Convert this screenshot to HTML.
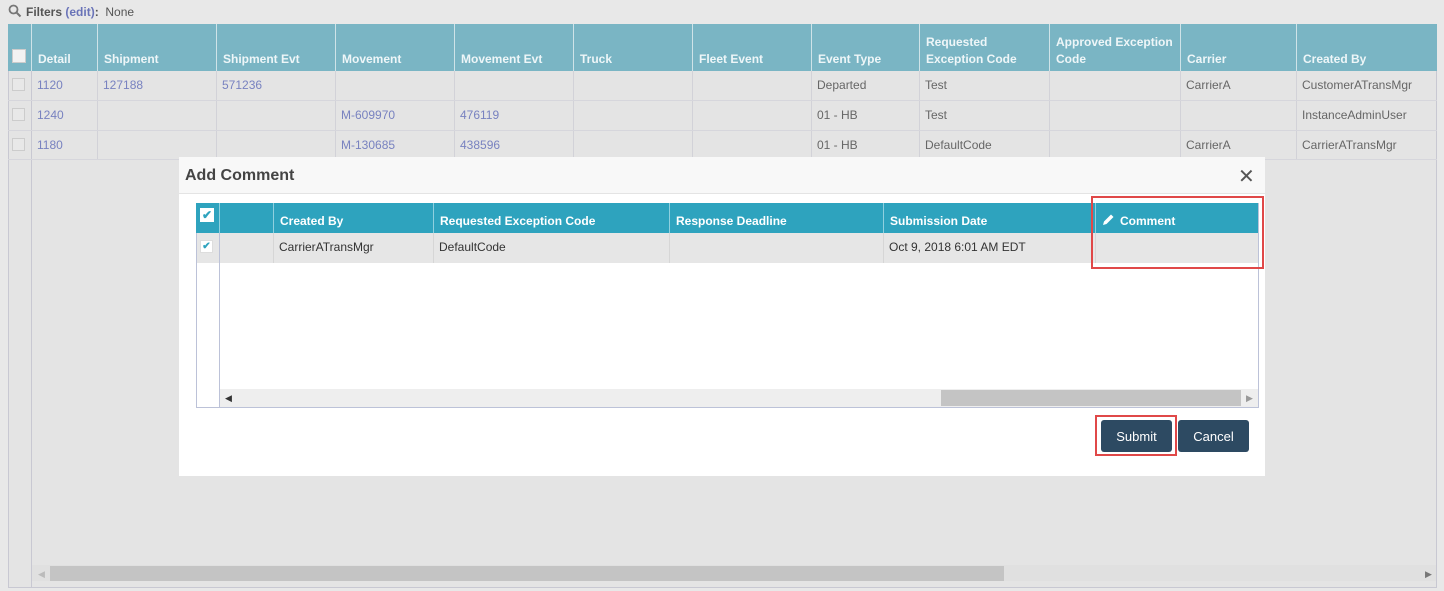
<!DOCTYPE html>
<html><head><style>
*{box-sizing:border-box;margin:0;padding:0}
body{width:1444px;height:591px;background:#e8e8e8;font-family:"Liberation Sans",sans-serif;font-size:12px;position:relative;overflow:hidden;color:#555}
.a{position:absolute}
.hd{background:#7ab5c4;color:#eef6f8;font-weight:bold}
.hc{position:absolute;top:24px;height:47px;border-left:1px solid #cfe3e8;padding:0 6px;display:flex;align-items:flex-end;padding-bottom:3px;line-height:17px;font-weight:bold;color:#eef6f8;font-size:12px}
.vl{position:absolute;top:71px;height:88px;border-left:1px solid #d2d2d8}
.hl{position:absolute;left:8px;width:1429px;border-top:1px solid #d6d6dc}
.c{position:absolute;font-size:12px;color:#666}
.lk{color:#7882c0}
.cb{position:absolute;width:13px;height:13px;border:1px solid #ccc;background:#e8e8e8}
.mh{position:absolute;top:203px;height:30px;border-left:1px solid #8fd0df;color:#fff;font-weight:bold;padding:11px 6px 0;font-size:12px}
.btn{position:absolute;top:420px;height:32px;background:#2d4a62;color:#fff;border-radius:3px;font-size:13px;display:flex;align-items:center;justify-content:center}
</style></head><body>
<svg class="a" style="left:8px;top:4px" width="14" height="14" viewBox="0 0 14 14"><circle cx="5.5" cy="5.5" r="4" fill="none" stroke="#777" stroke-width="1.8"/><path d="M8.5 8.5L12.5 12.5" stroke="#777" stroke-width="2"/></svg>
<div class="a" style="left:26px;top:5px;font-size:12px;color:#555"><b>Filters</b> <b style="color:#6a74b8">(edit)</b><b>:</b> &nbsp;None</div>
<div class="a" style="left:8px;top:24px;width:1429px;height:564px;border:1px solid #c8c8d2;background:#e4e4e4"></div>
<div class="a hd" style="left:8px;top:24px;width:1429px;height:47px"></div>
<div class="a" style="left:31px;top:24px;height:564px;border-left:1px solid #c8c8d2"></div>
<div class="a" style="left:12px;top:49px;width:14px;height:14px;background:#f2f2f2;border:1px solid #ccc"></div>
<div class="hc" style="left:31px;width:66px">Detail</div>
<div class="hc" style="left:97px;width:119px">Shipment</div>
<div class="hc" style="left:216px;width:119px">Shipment Evt</div>
<div class="hc" style="left:335px;width:119px">Movement</div>
<div class="hc" style="left:454px;width:119px">Movement Evt</div>
<div class="hc" style="left:573px;width:119px">Truck</div>
<div class="hc" style="left:692px;width:119px">Fleet Event</div>
<div class="hc" style="left:811px;width:108px">Event Type</div>
<div class="hc" style="left:919px;width:130px">Requested<br>Exception Code</div>
<div class="hc" style="left:1049px;width:131px">Approved Exception<br>Code</div>
<div class="hc" style="left:1180px;width:116px">Carrier</div>
<div class="hc" style="left:1296px;width:141px">Created By</div>
<div class="vl" style="left:97px"></div><div class="vl" style="left:216px"></div><div class="vl" style="left:335px"></div><div class="vl" style="left:454px"></div><div class="vl" style="left:573px"></div><div class="vl" style="left:692px"></div><div class="vl" style="left:811px"></div><div class="vl" style="left:919px"></div><div class="vl" style="left:1049px"></div><div class="vl" style="left:1180px"></div><div class="vl" style="left:1296px"></div>
<div class="hl" style="top:100px"></div><div class="hl" style="top:130px"></div><div class="hl" style="top:159px"></div>
<div class="cb" style="left:12px;top:78px"></div><div class="cb" style="left:12px;top:108px"></div><div class="cb" style="left:12px;top:138px"></div>
<div class="c lk" style="left:37px;top:78px">1120</div><div class="c lk" style="left:103px;top:78px">127188</div><div class="c lk" style="left:222px;top:78px">571236</div>
<div class="c" style="left:817px;top:78px">Departed</div><div class="c" style="left:925px;top:78px">Test</div><div class="c" style="left:1186px;top:78px">CarrierA</div><div class="c" style="left:1302px;top:78px">CustomerATransMgr</div>
<div class="c lk" style="left:37px;top:108px">1240</div><div class="c lk" style="left:341px;top:108px">M-609970</div><div class="c lk" style="left:460px;top:108px">476119</div>
<div class="c" style="left:817px;top:108px">01 - HB</div><div class="c" style="left:925px;top:108px">Test</div><div class="c" style="left:1302px;top:108px">InstanceAdminUser</div>
<div class="c lk" style="left:37px;top:138px">1180</div><div class="c lk" style="left:341px;top:138px">M-130685</div><div class="c lk" style="left:460px;top:138px">438596</div>
<div class="c" style="left:817px;top:138px">01 - HB</div><div class="c" style="left:925px;top:138px">DefaultCode</div><div class="c" style="left:1186px;top:138px">CarrierA</div><div class="c" style="left:1302px;top:138px">CarrierATransMgr</div>
<div class="a" style="left:32px;top:565px;width:1404px;height:16px;background:#e0e0e0"></div>
<div class="a" style="left:50px;top:566px;width:954px;height:15px;background:#c4c4c4"></div>
<div class="a" style="left:38px;top:569px;color:#bbb;font-size:9px">◀</div><div class="a" style="left:1425px;top:569px;color:#777;font-size:9px">▶</div>

<div class="a" style="left:179px;top:157px;width:1086px;height:319px;background:#fff"></div>
<div class="a" style="left:179px;top:157px;width:1086px;height:37px;background:#f8f8f8;border-bottom:1px solid #e4e4e4"></div>
<div class="a" style="left:185px;top:167px;font-size:16px;font-weight:bold;color:#444">Add Comment</div>
<div class="a" style="left:1238px;top:164px;font-size:20px;color:#555">✕</div>
<div class="a" style="left:196px;top:203px;width:1063px;height:205px;border:1px solid #bcc2d8"></div>
<div class="a" style="left:196px;top:203px;width:1062px;height:30px;background:#2ea3be"></div>
<div class="a" style="left:197px;top:233px;width:1061px;height:30px;background:#e6e6e6"></div>
<div class="a" style="left:219px;top:203px;height:205px;border-left:1px solid #bcc2d8"></div>
<div class="mh" style="left:219px;width:54px"></div>
<div class="mh" style="left:273px;width:160px">Created By</div>
<div class="mh" style="left:433px;width:236px">Requested Exception Code</div>
<div class="mh" style="left:669px;width:214px">Response Deadline</div>
<div class="mh" style="left:883px;width:212px">Submission Date</div>
<div class="mh" style="left:1095px;width:163px;padding-left:24px">Comment</div>
<svg class="a" style="left:1102px;top:213px" width="13" height="13" viewBox="0 0 13 13"><path d="M1 12L2 8.5L9 1.5L11.5 4L4.5 11Z" fill="#fff"/></svg>
<div class="a" style="left:273px;top:233px;height:30px;border-left:1px solid #d6d6d6"></div><div class="a" style="left:433px;top:233px;height:30px;border-left:1px solid #d6d6d6"></div><div class="a" style="left:669px;top:233px;height:30px;border-left:1px solid #d6d6d6"></div><div class="a" style="left:883px;top:233px;height:30px;border-left:1px solid #d6d6d6"></div><div class="a" style="left:1095px;top:233px;height:30px;border-left:1px solid #d6d6d6"></div>
<div class="a" style="left:200px;top:208px;width:14px;height:14px;background:#fff;color:#2ea3be;font-size:12px;line-height:14px;text-align:center;font-weight:bold">✔</div>
<div class="a" style="left:200px;top:240px;width:13px;height:13px;background:#fff;border:1px solid #ddd;color:#2ea3be;font-size:10px;line-height:12px;text-align:center;font-weight:bold">✔</div>
<div class="c" style="left:279px;top:240px;color:#333">CarrierATransMgr</div>
<div class="c" style="left:439px;top:240px;color:#333">DefaultCode</div>
<div class="c" style="left:889px;top:240px;color:#333">Oct 9, 2018 6:01 AM EDT</div>
<div class="a" style="left:220px;top:389px;width:1038px;height:18px;background:#eee"></div>
<div class="a" style="left:941px;top:390px;width:300px;height:16px;background:#c4c4c4"></div>
<div class="a" style="left:225px;top:393px;font-size:9px;color:#333">◀</div><div class="a" style="left:1246px;top:393px;font-size:9px;color:#999">▶</div>
<div class="btn" style="left:1101px;width:71px">Submit</div>
<div class="btn" style="left:1178px;width:71px">Cancel</div>
<div class="a" style="left:1091px;top:196px;width:173px;height:73px;border:2px solid #e04848"></div>
<div class="a" style="left:1095px;top:415px;width:82px;height:41px;border:2px solid #e04848"></div>
</body></html>
